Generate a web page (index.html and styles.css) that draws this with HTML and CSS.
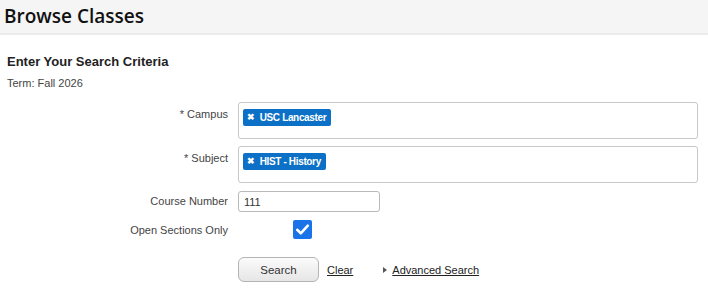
FILE: index.html
```html
<!DOCTYPE html>
<html>
<head>
<meta charset="utf-8">
<link rel="stylesheet" href="styles.css">
</head>
<body>
<header class="page-header"><h1 class="page-title">Browse Classes</h1></header>
<main class="content">
  <h2 class="section-title">Enter Your Search Criteria</h2>
  <div class="term">Term: Fall 2026</div>
  <form class="search-form">
    <label class="field-label top">* Campus</label>
    <div class="multi-box">
      <span class="tag"><span class="tag-x">&#x2716;</span>USC Lancaster</span>
    </div>
    <label class="field-label top">* Subject</label>
    <div class="multi-box">
      <span class="tag"><span class="tag-x">&#x2716;</span>HIST - History</span>
    </div>
    <label class="field-label">Course Number</label>
    <div class="input-cell"><input class="text-input" type="text" value="111"></div>
    <label class="field-label check-label">Open Sections Only</label>
    <div class="check-cell">
      <span class="checkbox">
        <svg width="19" height="19" viewBox="0 0 19 19"><rect x="0" y="0" width="19" height="19" rx="2" fill="#1a73e8"/><path d="M4.2 9.8 L7.8 13.3 L14.8 5.6" fill="none" stroke="#fff" stroke-width="2.6" stroke-linecap="round" stroke-linejoin="round"/></svg>
      </span>
    </div>
    <div></div>
    <div class="actions">
      <button class="btn" type="button">Search</button>
      <a class="link clear" href="#">Clear</a>
      <span class="adv"><span class="arrow"></span><a class="link" href="#">Advanced Search</a></span>
    </div>
  </form>
</main>
</body>
</html>
```
FILE: styles.css
```css
html, body { margin: 0; padding: 0; background: #fff; }
body { font-family: "Liberation Sans", Arial, sans-serif; color: #333; width: 708px; height: 291px; overflow: hidden; }
.page-header { height: 33px; background: #f5f5f5; border-bottom: 2px solid #ebebeb; }
.page-title { margin: 0; padding: 2px 0 0 4px; font-family: "Open Sans", sans-serif; font-weight: 600; font-size: 19px; line-height: 29px; color: #111; }
.content { padding: 0 10px 0 7px; }
.section-title { margin: 19px 0 0; font-size: 13px; font-weight: bold; line-height: 16px; color: #222; }
.term { margin-top: 6px; font-size: 11px; line-height: 14px; color: #444; }
.search-form { display: grid; grid-template-columns: 221px 1fr; column-gap: 10px; margin-top: 12px; align-items: center; }
.field-label { font-size: 11px; text-align: right; color: #444; line-height: 14px; }
.field-label.top { align-self: start; padding-top: 5px; }
.multi-box { border: 1px solid #c8c8c8; border-radius: 3px; padding: 3px 4px; box-sizing: border-box; height: 37px; margin-bottom: 7px; }
.tag { display: inline-flex; align-items: center; height: 17px; padding: 0 5px 0 4px; background: #0b70c6; color: #fff; font-size: 10px; font-weight: bold; border-radius: 2px; letter-spacing: -0.35px; }
.tag-x { font-size: 8.5px; margin-right: 5px; }
.input-cell { padding-top: 1px; }
.text-input { width: 142px; height: 21px; box-sizing: border-box; border: 1px solid #b9b9b9; border-radius: 3px; padding: 2px 5px; font-family: "Liberation Sans", Arial, sans-serif; font-size: 11px; color: #333; outline: none; display: block; }
.check-cell { padding: 8px 0 0; }
.checkbox { display: block; margin-left: 55px; width: 19px; height: 19px; }
.checkbox svg { display: block; }
.check-label { padding-top: 8px; }
.actions { display: flex; align-items: center; margin-top: 18px; }
.btn { width: 81px; height: 25px; border: 1px solid #b4b4b4; border-radius: 6px; background: linear-gradient(#fbfbfb, #e6e6e6); font-family: "Liberation Sans", Arial, sans-serif; font-size: 11.5px; color: #333; padding: 0; }
.link { color: #222; font-size: 11px; text-decoration: underline; }
.clear { margin-left: 8px; }
.adv { display: inline-flex; align-items: center; margin-left: 30px; }
.arrow { width: 0; height: 0; border-left: 4px solid #555; border-top: 3px solid transparent; border-bottom: 3px solid transparent; margin-right: 5px; }
```
